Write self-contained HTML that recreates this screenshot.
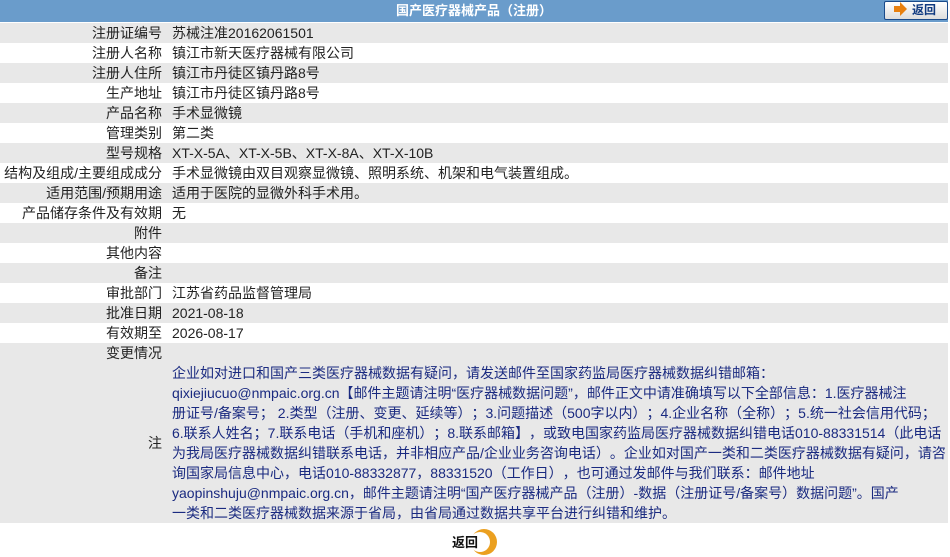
<!DOCTYPE html>
<html><head><meta charset="utf-8"><style>
body{margin:0;width:950px;height:557px;background:#fff;font-family:"Liberation Sans","Noto Sans CJK SC",sans-serif;font-size:14px;color:#222;position:relative;overflow:hidden;text-spacing-trim:space-all}
.hd{position:absolute;left:0;top:0;width:948px;height:22px;background:#6a9ccb;color:#fff;font-weight:bold;text-align:center;line-height:22px;font-size:13px}
.btn{position:absolute;left:884px;top:1px;width:62px;height:17px;border:1px solid #1a4a8a;border-radius:2px;background:linear-gradient(#fff,#ddd);font-weight:bold;color:#103a80;line-height:17px;font-size:12px}
.btn i{position:absolute;left:9px;top:4px;width:6px;height:6px;background:#e8800f}
.btn i:after{content:"";position:absolute;left:6px;top:-4px;border-left:7px solid #e8800f;border-top:7px solid transparent;border-bottom:7px solid transparent}
.btn span{position:absolute;left:27px;top:0}
.r{position:absolute;left:0;width:948px;height:20px;line-height:20px}
.g{background:#e8e8e8}
.l{position:absolute;right:786px;white-space:nowrap}
.v{position:absolute;left:172px;white-space:nowrap}
.notes{position:absolute;left:0;top:363px;width:948px;height:160px;background:#e8e8e8}
.notes .t{position:absolute;left:172px;top:0;line-height:20px;color:#1a2a80;white-space:nowrap}
.rt{position:absolute;left:452px;top:528px;width:46px;height:28px}
</style></head><body>
<div class="hd">国产医疗器械产品（注册）</div>
<div class="btn"><i></i><span>返回</span></div>
<div class="r g" style="top:23px"><span class="l">注册证编号</span><span class="v">苏械注准20162061501</span></div>
<div class="r" style="top:43px"><span class="l">注册人名称</span><span class="v">镇江市新天医疗器械有限公司</span></div>
<div class="r g" style="top:63px"><span class="l">注册人住所</span><span class="v">镇江市丹徒区镇丹路8号</span></div>
<div class="r" style="top:83px"><span class="l">生产地址</span><span class="v">镇江市丹徒区镇丹路8号</span></div>
<div class="r g" style="top:103px"><span class="l">产品名称</span><span class="v">手术显微镜</span></div>
<div class="r" style="top:123px"><span class="l">管理类别</span><span class="v">第二类</span></div>
<div class="r g" style="top:143px"><span class="l">型号规格</span><span class="v">XT-X-5A、XT-X-5B、XT-X-8A、XT-X-10B</span></div>
<div class="r" style="top:163px"><span class="l">结构及组成/主要组成成分</span><span class="v">手术显微镜由双目观察显微镜、照明系统、机架和电气装置组成。</span></div>
<div class="r g" style="top:183px"><span class="l">适用范围/预期用途</span><span class="v">适用于医院的显微外科手术用。</span></div>
<div class="r" style="top:203px"><span class="l">产品储存条件及有效期</span><span class="v">无</span></div>
<div class="r g" style="top:223px"><span class="l">附件</span></div>
<div class="r" style="top:243px"><span class="l">其他内容</span></div>
<div class="r g" style="top:263px"><span class="l">备注</span></div>
<div class="r" style="top:283px"><span class="l">审批部门</span><span class="v">江苏省药品监督管理局</span></div>
<div class="r g" style="top:303px"><span class="l">批准日期</span><span class="v">2021-08-18</span></div>
<div class="r" style="top:323px"><span class="l">有效期至</span><span class="v">2026-08-17</span></div>
<div class="r g" style="top:343px"><span class="l">变更情况</span></div>
<div class="notes"><span class="l" style="top:70px;line-height:20px">注</span>
<div class="t">企业如对进口和国产三类医疗器械数据有疑问，请发送邮件至国家药监局医疗器械数据纠错邮箱：<br>qixiejiucuo@nmpaic.org.cn【邮件主题请注明“医疗器械数据问题”，邮件正文中请准确填写以下全部信息：1.医疗器械注<br>册证号/备案号； 2.类型（注册、变更、延续等）；3.问题描述（500字以内）；4.企业名称（全称）；5.统一社会信用代码；<br>6.联系人姓名；7.联系电话（手机和座机）；8.联系邮箱】，或致电国家药监局医疗器械数据纠错电话010-88331514（此电话<br>为我局医疗器械数据纠错联系电话，并非相应产品/企业业务咨询电话）。企业如对国产一类和二类医疗器械数据有疑问，请咨<br>询国家局信息中心，电话010-88332877，88331520（工作日），也可通过发邮件与我们联系：邮件地址<br>yaopinshuju@nmpaic.org.cn，邮件主题请注明“国产医疗器械产品（注册）-数据（注册证号/备案号）数据问题”。国产<br>一类和二类医疗器械数据来源于省局，由省局通过数据共享平台进行纠错和维护。</div></div>
<svg class="rt" viewBox="0 0 46 28"><circle cx="32" cy="14" r="13" fill="#eba020"/><circle cx="28" cy="14" r="10" fill="#fff"/><text x="0" y="19" font-size="13" font-weight="bold" fill="#111" font-family="Liberation Sans,Noto Sans CJK SC,sans-serif">返回</text></svg>
</body></html>
